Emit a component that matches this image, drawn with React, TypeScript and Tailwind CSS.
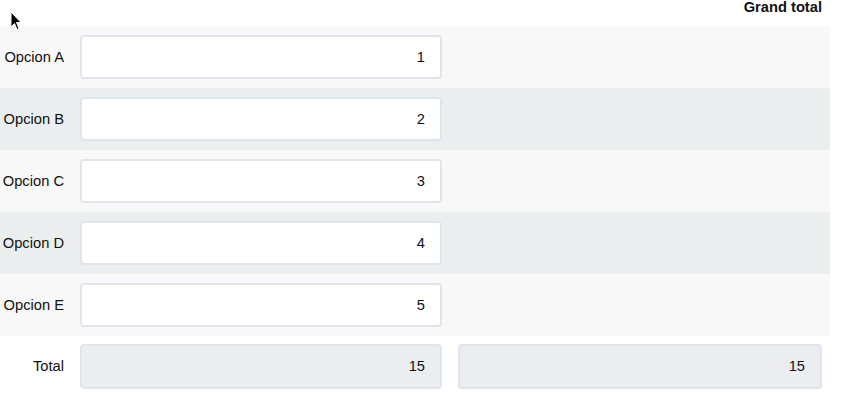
const rows = [
  { label: 'Opcion A', value: 1 },
  { label: 'Opcion B', value: 2 },
  { label: 'Opcion C', value: 3 },
  { label: 'Opcion D', value: 4 },
  { label: 'Opcion E', value: 5 },
]

export default function App() {
  const total = rows.reduce((s, r) => s + r.value, 0)

  return (
    <div className="relative w-[841px] h-[396px] bg-white text-[14.7px] text-[#111] font-['Liberation_Sans',Arial,sans-serif]">
      {/* mouse pointer */}
      <svg className="absolute left-[10px] top-[11px]" width="12" height="20" viewBox="0 0 12 20">
        <path d="M1 1 L1 16 L4.5 12.5 L7 18.5 L9 17.5 L6.5 11.5 L11 11.5 Z" fill="#000" stroke="#fff" strokeWidth="1" />
      </svg>

      <div className="w-[830px]">
        <div className="h-[26px] flex justify-end pr-[8px] font-bold leading-[14px]">
          Grand total
        </div>

        {rows.map((row, i) => (
          <div
            key={row.label}
            className={`h-[62px] flex items-center ${i % 2 === 0 ? 'bg-[#f8f8f8]' : 'bg-[#ebeeef]'}`}
          >
            <div className="w-[80px] text-right pr-[16px]">{row.label}</div>
            <div className="w-[362px] h-[44px] bg-white border-2 border-[#dfe5ea] rounded-[4px] flex items-center justify-end pr-[15px]">
              {row.value}
            </div>
          </div>
        ))}

        <div className="h-[60px] flex items-center">
          <div className="w-[80px] text-right pr-[16px]">Total</div>
          <div className="w-[362px] h-[45px] bg-[#ebeef0] border-2 border-[#dfe5ea] rounded-[4px] flex items-center justify-end pr-[15px]">
            {total}
          </div>
          <div className="ml-[16px] w-[364px] h-[45px] bg-[#ebeef0] border-2 border-[#dfe5ea] rounded-[4px] flex items-center justify-end pr-[15px]">
            {total}
          </div>
        </div>
      </div>
    </div>
  )
}
